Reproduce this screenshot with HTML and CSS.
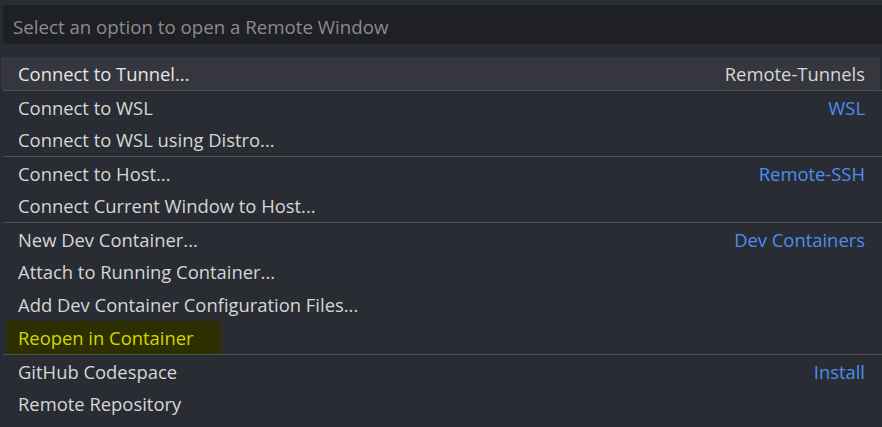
FILE: index.html
```html
<!DOCTYPE html>
<html>
<head>
<meta charset="utf-8">
<link rel="stylesheet" href="styles.css">
</head>
<body>
<div class="picker">
  <div class="input-wrap">
    <div class="input">Select an option to open a Remote Window</div>
  </div>
  <ul class="list">
    <li class="row selected"><span class="label">Connect to Tunnel...</span><span class="detail plain">Remote-Tunnels</span></li>
    <li class="row sep"><span class="label">Connect to WSL</span><span class="detail">WSL</span></li>
    <li class="row"><span class="label">Connect to WSL using Distro...</span></li>
    <li class="row sep"><span class="label">Connect to Host...</span><span class="detail">Remote-SSH</span></li>
    <li class="row"><span class="label">Connect Current Window to Host...</span></li>
    <li class="row sep"><span class="label">New Dev Container...</span><span class="detail">Dev Containers</span></li>
    <li class="row"><span class="label">Attach to Running Container...</span></li>
    <li class="row"><span class="label">Add Dev Container Configuration Files...</span></li>
    <li class="row"><span class="label mark">Reopen in Container</span></li>
    <li class="row sep"><span class="label">GitHub Codespace</span><span class="detail">Install</span></li>
    <li class="row"><span class="label">Remote Repository</span></li>
  </ul>
</div>
</body>
</html>
```
FILE: styles.css
```css
html, body {
  margin: 0;
  padding: 0;
  background: #2a2c33;
  width: 882px;
  height: 427px;
  overflow: hidden;
}
body {
  font-family: "Open Sans", "Noto Sans", sans-serif;
  font-size: 18.4px;
  color: #d6d6d6;
}
.picker {
  display: flex;
  flex-direction: column;
}
.input-wrap {
  padding: 5px 0 0 3px;
}
.input {
  height: 39px;
  box-sizing: border-box;
  background: #1f2024;
  color: #8a8b8f;
  font-size: 18.7px;
  display: flex;
  align-items: center;
  padding: 3px 0 0 10px;
  border-radius: 2px 0 0 2px;
}
.list {
  list-style: none;
  margin: 13px 0 0 0;
  padding: 0 2px 0 1px;
}
.row {
  height: 33px;
  box-sizing: border-box;
  display: flex;
  align-items: center;
  justify-content: space-between;
  padding: 0 15px 0 17px;
}
.row.sep {
  border-top: 1px solid #4e4f54;
  margin-left: 2px;
  margin-right: -2px;
  padding-left: 15px;
  padding-right: 17px;
}
.row.selected {
  background: #36373e;
  border-radius: 3px;
  color: #e6e6e6;
}
.detail {
  color: #4d8cf2;
}
.detail.plain {
  color: #d6d6d6;
}
.mark {
  background: #2e2f00;
  color: #d0d800;
  margin-left: -11px;
  padding: 4px 27px 4px 11px;
}
```
